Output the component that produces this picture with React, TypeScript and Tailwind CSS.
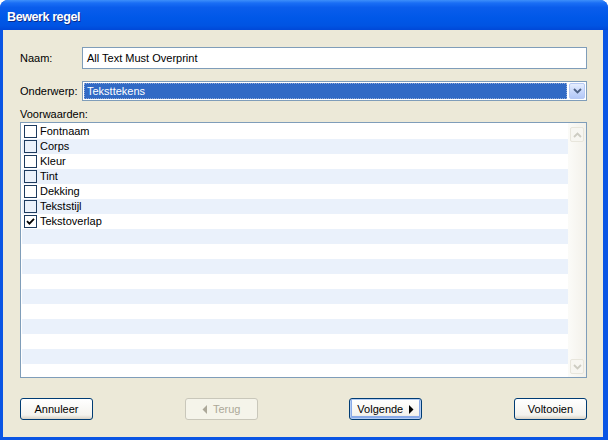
import { ReactNode } from 'react';

const rows = [
  { label: 'Fontnaam', checked: false },
  { label: 'Corps', checked: false },
  { label: 'Kleur', checked: false },
  { label: 'Tint', checked: false },
  { label: 'Dekking', checked: false },
  { label: 'Tekststijl', checked: false },
  { label: 'Tekstoverlap', checked: true },
];

function Checkbox({ checked }: { checked: boolean }) {
  return (
    <div className="w-[13px] h-[13px] border border-[#1C3A5E] flex items-center justify-center shrink-0">
      {checked && (
        <svg width="9" height="9" viewBox="0 0 9 9">
          <path d="M1 4.2 L3.4 6.6 L8 1.8" fill="none" stroke="#000" strokeWidth="1.8" />
        </svg>
      )}
    </div>
  );
}

function Chevron({ up, color }: { up?: boolean; color: string }) {
  return (
    <svg width="9" height="6" viewBox="0 0 9 6">
      <path
        d={up ? 'M1 5 L4.5 1.5 L8 5' : 'M1 1 L4.5 4.5 L8 1'}
        fill="none"
        stroke={color}
        strokeWidth="1.8"
      />
    </svg>
  );
}

type ButtonKind = 'normal' | 'disabled' | 'default';

function XpButton({ kind = 'normal', children }: { kind?: ButtonKind; children: ReactNode }) {
  const styles = {
    normal:
      'border-[#003C74] text-black bg-[linear-gradient(to_bottom,#FFFFFF,#F4F3EE_80%,#D8D2C6)]',
    disabled: 'border-[#C9C7BA] text-[#ACA899] bg-[#F5F4EA]',
    default:
      'border-[#003C74] text-black bg-[linear-gradient(to_bottom,#FFFFFF,#F4F3EE_80%,#D8D2C6)] shadow-[inset_0_0_0_1px_#B4CDF3,inset_0_-1px_0_2px_#89AAE8]',
  };
  return (
    <div
      className={`w-[73px] h-[22px] rounded-[3px] border flex items-center justify-center gap-[6px] text-[11px] ${styles[kind]}`}
    >
      {children}
    </div>
  );
}

export default function App() {
  const listRows = Array.from({ length: 17 }, (_, i) => rows[i] ?? null);

  return (
    <div className="w-[608px] h-[440px] flex flex-col bg-[#0A55E4] rounded-t-[8px] overflow-hidden font-['Liberation_Sans',Arial,sans-serif] text-[11px] text-black select-none">
      <div className="h-[30px] shrink-0 flex items-center pl-[7px] pt-[5px] bg-[linear-gradient(to_bottom,#3D8FFA_0%,#1A6EF5_10%,#0A5DEC_25%,#0058E8_60%,#0054E3_85%,#0048D8_100%)]">
        <span className="text-white font-bold text-[12.5px] tracking-[-0.4px] [text-shadow:1px_1px_0_#0A2A8A]">
          Bewerk regel
        </span>
      </div>

      <div className="flex-1 ml-[3px] mr-[5px] mb-[3px] bg-[#ECE9D8] flex flex-col pl-[17px] pr-[16px] pt-[17px]">
        <div className="grid grid-cols-[62px_1fr] items-center">
          <span>Naam:</span>
          <div className="h-[22px] border border-[#7F9DB9] bg-white flex items-center pl-[4px]">
            All Text Must Overprint
          </div>
        </div>

        <div className="grid grid-cols-[62px_1fr] items-center mt-[12px]">
          <span>Onderwerp:</span>
          <div className="h-[20px] border border-[#7F9DB9] bg-white flex items-center p-[1px]">
            <div className="flex-1 h-[16px] bg-[#316AC5] border border-dotted border-[#8FA9D6] flex items-center pl-[2px] text-white">
              Teksttekens
            </div>
            <div className="w-[16px] h-[16px] ml-[2px] rounded-[2px] border border-[#B6C9F4] bg-[linear-gradient(to_bottom,#E6EEFE,#C4D5FB_60%,#B3C8F7)] flex items-center justify-center">
              <Chevron color="#4D6185" />
            </div>
          </div>
        </div>

        <div className="mt-[6px] leading-[14px]">Voorwaarden:</div>

        <div className="mt-[1px] h-[256px] border border-[#7F9DB9] bg-white flex overflow-hidden">
          <div className="flex-1 pt-[1px] pl-[1px] overflow-hidden">
            {listRows.map((row, i) => (
              <div
                key={i}
                className={`h-[15px] flex items-center gap-[3px] pl-[2px] ${
                  i % 2 === 1 ? 'bg-[#EAF1FB]' : 'bg-white'
                }`}
              >
                {row && (
                  <>
                    <Checkbox checked={row.checked} />
                    <span>{row.label}</span>
                  </>
                )}
              </div>
            ))}
          </div>
          <div className="w-[18px] shrink-0 flex flex-col justify-between p-[1px] bg-[linear-gradient(to_right,#FBFBF8,#F3F1EA)]">
            <div className="h-[15px] mt-[3px] mx-[1px] rounded-[2px] border border-[#E8E6DC] bg-[#F7F6F1] flex items-center justify-center">
              <Chevron up color="#CDCCC2" />
            </div>
            <div className="h-[15px] mb-[2px] mx-[1px] rounded-[2px] border border-[#E8E6DC] bg-[#F7F6F1] flex items-center justify-center">
              <Chevron color="#CDCCC2" />
            </div>
          </div>
        </div>

        <div className="mt-[20px] flex justify-between">
          <XpButton>Annuleer</XpButton>
          <XpButton kind="disabled">
            <svg width="5" height="9" viewBox="0 0 5 9">
              <path d="M5 0 L0.5 4.5 L5 9 Z" fill="#ACA899" />
            </svg>
            <span>Terug</span>
          </XpButton>
          <XpButton kind="default">
            <span>Volgende</span>
            <svg width="5" height="9" viewBox="0 0 5 9">
              <path d="M0 0 L4.5 4.5 L0 9 Z" fill="#000" />
            </svg>
          </XpButton>
          <XpButton>Voltooien</XpButton>
        </div>
      </div>
    </div>
  );
}
